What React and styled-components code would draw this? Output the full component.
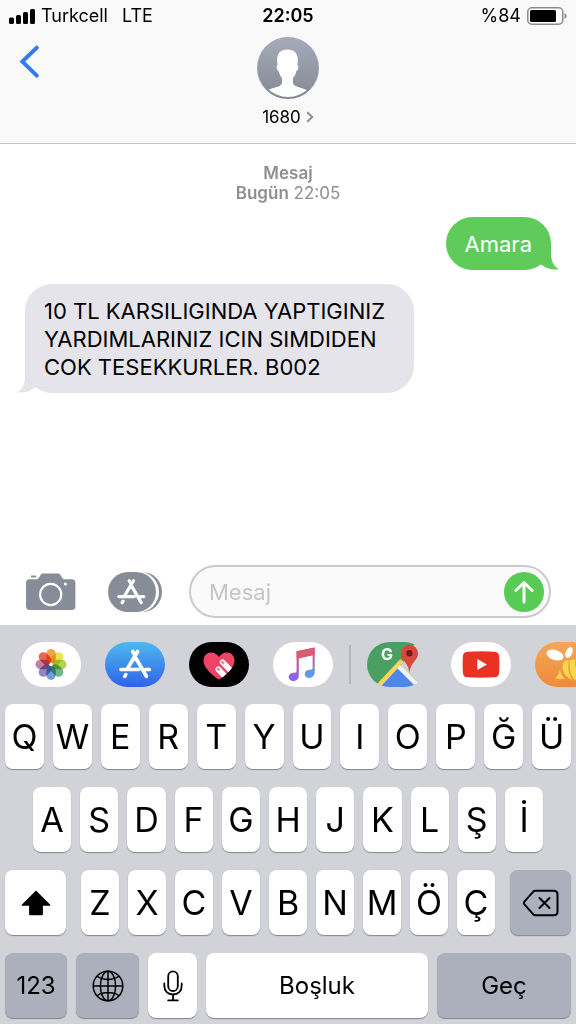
import React from 'react';
import styled, { createGlobalStyle, css } from 'styled-components';

const GlobalStyle = createGlobalStyle`
  * {
    box-sizing: border-box;
  }

  body {
    margin: 0;
    background: #fff;
    color: #000;
    font-family: Inter, 'Liberation Sans', sans-serif;
  }

  button,
  input {
    font: inherit;
    color: inherit;
    border: 0;
    padding: 0;
    background: none;
  }

  svg {
    display: block;
    flex-shrink: 0;
  }
`;

const Page = styled.div`
  display: flex;
  flex-direction: column;
  min-height: 100vh;
`;

const Header = styled.header`
  background: #f9f9f9;
  border-bottom: 1px solid #c4c4c8;
`;

const StatusBar = styled.div`
  display: grid;
  grid-template-columns: 1fr auto 1fr;
  align-items: center;
  height: 32px;
  padding: 0 9px;
  font-size: 18px;
  line-height: 20px;
`;

const StatusGroup = styled.div`
  display: flex;
  align-items: center;
  justify-content: ${props => (props.$end ? 'flex-end' : 'flex-start')};
  gap: 6px;
`;

const Network = styled.span`
  margin-left: 8px;
`;

const Clock = styled.time`
  font-weight: 600;
`;

const NavBar = styled.nav`
  display: grid;
  grid-template-columns: 1fr auto 1fr;
  align-items: start;
  padding: 5px 18px 16px;
`;

const BackButton = styled.button`
  justify-self: start;
  margin-top: 7px;
`;

const Contact = styled.button`
  display: flex;
  flex-direction: column;
  align-items: center;
  gap: 8px;
`;

const ContactName = styled.span`
  display: flex;
  align-items: center;
  gap: 5px;
  font-size: 17px;
  line-height: 20px;
`;

const Thread = styled.main`
  flex: 1;
  display: flex;
  flex-direction: column;
  gap: 14px;
  padding: 19px 25px;
`;

const Stamp = styled.p`
  margin: 0;
  color: #8e8e93;
  font-size: 17px;
  line-height: 20px;
  text-align: center;
`;

const Strong = styled.strong`
  font-weight: 600;
`;

const Bubble = styled.div`
  position: relative;
  max-width: 74%;
  padding: 13px 19px 12px;
  border-radius: 27px;
  font-size: 22px;
  line-height: 28px;
  ${props =>
    props.$sent
      ? css`
          align-self: flex-end;
          background: #5fcb5b;
          color: #fff;
        `
      : css`
          align-self: flex-start;
          background: #e5e4ea;
        `}
`;

const Tail = styled.svg`
  position: absolute;
  bottom: 0;
  ${props =>
    props.$sent
      ? css`
          right: -8px;
          fill: #5fcb5b;
        `
      : css`
          left: -8px;
          fill: #e5e4ea;
          transform: scaleX(-1);
        `}
`;

const Composer = styled.form`
  display: flex;
  align-items: center;
  padding: 0 25px 7px 26px;
`;

const CameraButton = styled.button`
  margin-right: 32px;
`;

const AppsButton = styled.button`
  margin-right: 27px;
`;

const Field = styled.div`
  flex: 1;
  min-width: 0;
  display: flex;
  align-items: center;
  height: 53px;
  padding: 0 5px 0 18px;
  border: 2px solid #cacace;
  border-radius: 27px;
  background: #fafafa;
`;

const MessageInput = styled.input`
  flex: 1;
  min-width: 0;
  font-size: 22px;
  line-height: 28px;
  outline: 0;

  &::placeholder {
    color: #c5c5ca;
    opacity: 1;
  }
`;

const SendButton = styled.button`
  display: flex;
  align-items: center;
  justify-content: center;
  flex-shrink: 0;
  width: 40px;
  height: 40px;
  border-radius: 50%;
  background: #58cb55;
`;

const Dock = styled.section`
  background: #d1d3d9;
`;

const AppStrip = styled.div`
  display: flex;
  align-items: center;
  height: 79px;
  padding-left: 21px;
  overflow: hidden;
`;

const AppGroup = styled.div`
  display: flex;
  gap: 24px;
`;

const Divider = styled.span`
  flex-shrink: 0;
  width: 2px;
  height: 39px;
  margin: 0 16px;
  background: #b4b6bb;
`;

const AppButton = styled.button`
  flex-shrink: 0;
  width: 60px;
  height: 45px;
  border-radius: 23px;
  background: ${props => props.$background};
`;

const Keyboard = styled.div`
  display: flex;
  flex-direction: column;
  gap: 18px;
  padding: 0 5px 6px;
`;

const KeyRow = styled.div`
  display: flex;
  gap: 9px;
  padding: ${props => (props.$inset ? '0 28px' : '0')};
`;

const Letters = styled.div`
  flex: 1;
  display: flex;
  gap: 9px;
  margin: 0 6px;
`;

const Key = styled.button`
  display: flex;
  align-items: center;
  justify-content: center;
  flex: ${props => (props.$width ? `0 0 ${props.$width}px` : '1 1 0')};
  min-width: 0;
  height: 65px;
  border-radius: 8px;
  background: ${props => (props.$dark ? '#abb0bc' : '#fff')};
  box-shadow: 0 1px 1px #85878c;
  font-size: ${props => (props.$word ? '24px' : '34px')};
  line-height: 40px;
`;

function SignalIcon() {
  return (
    <svg width="26" height="15" viewBox="0 0 26 15">
      <rect x="0" y="8.5" width="5" height="6.5" rx="1.5" />
      <rect x="7" y="6" width="5" height="9" rx="1.5" />
      <rect x="14" y="3" width="5" height="12" rx="1.5" />
      <rect x="21" y="0" width="5" height="15" rx="1.5" />
    </svg>
  );
}

function BatteryIcon() {
  return (
    <svg width="40" height="18" viewBox="0 0 40 18">
      <rect x="0.8" y="0.8" width="35" height="16.4" rx="4.2" fill="#fff" stroke="#8b8b8d" strokeWidth="1.5" />
      <rect x="3" y="3" width="26" height="12" rx="1.5" />
      <path d="M37.5 6 Q39.6 7 39.6 9 T37.5 12Z" fill="#8b8b8d" />
    </svg>
  );
}

function BackIcon() {
  return (
    <svg width="24" height="36" viewBox="0 0 24 36" fill="none" stroke="#3478f6" strokeWidth="4">
      <path d="M18.8 3.6 4.4 17.6l14.4 14" strokeLinecap="round" strokeLinejoin="miter" />
    </svg>
  );
}

function AvatarIcon() {
  return (
    <svg width="62" height="62" viewBox="0 0 62 62">
      <defs>
        <linearGradient id="avatar" x1="0" y1="0" x2="0" y2="1">
          <stop offset="0" stopColor="#a5abb9" />
          <stop offset="1" stopColor="#858994" />
        </linearGradient>
        <clipPath id="avatarInner">
          <circle cx="31" cy="31" r="29" />
        </clipPath>
      </defs>
      <circle cx="31" cy="31" r="31" fill="url(#avatar)" />
      <path
        clipPath="url(#avatarInner)"
        fill="#fff"
        d="M30.5 12.5c7.5 0 10.8 4.6 10.3 11.5l-.3 4.2c1.6.3.9 4.8-1.1 5.9-.6 3-1.7 5-3.4 6.8v5.6c2 4 10 4 17 8.300V62H7.500v-7.200c7-4.300 15.500-4.300 17.500-8.300v-5.600c-1.700-1.800-2.800-3.800-3.400-6.800-2-1.100-2.700-5.600-1.100-5.900l-.3-4.200c-.5-6.900 2.800-11.500 10.300-11.500z"
      />
    </svg>
  );
}

function ChevronIcon() {
  return (
    <svg width="8" height="12" viewBox="0 0 8 12" fill="none" stroke="#8e8e93" strokeWidth="2">
      <path d="M1.2 1.2 6.2 6l-5 4.8" />
    </svg>
  );
}

function BubbleTail({ sent }) {
  return (
    <Tail $sent={sent} width="26" height="28" viewBox="0 0 26 28">
      <path d="M18 0v11.500c0 7 2.500 12.500 8 15.800-6.500.9-13-.8-18.500-5L4 0z" />
    </Tail>
  );
}

function CameraIcon() {
  return (
    <svg width="50" height="38" viewBox="0 0 50 38" fill="#868d99">
      <path d="M3.5 6.3H10c1.6 0 2.3-.7 3-1.8l1.4-2.2C15.3 1 16 .6 17.5.6h14c1.5 0 2.2.4 3.1 1.7L36 4.5c.7 1.1 1.4 1.8 3 1.8h6.7c2.5 0 3.7 1.3 3.7 3.7v23.2c0 2.4-1.2 3.7-3.7 3.7H3.7C1.2 36.9 0 35.6 0 33.2V10c0-2.4 1.2-3.7 3.5-3.7z" />
      <rect x="4.8" y="2.4" width="5.6" height="2.2" rx="1" />
      <circle cx="24.7" cy="21.5" r="10.6" fill="none" stroke="#fff" strokeWidth="2.1" />
      <circle cx="39.4" cy="10.9" r="1.5" fill="#fff" />
    </svg>
  );
}

function AppStoreMark() {
  return (
    <g fill="none" stroke="#fff" strokeWidth="3.7" strokeLinecap="round">
      <path d="M32.6 9.5 22.7 26.3M27.8 9.500l2 3.500M31 16.500l10.400 17.800M16 27.500h17.500M40.500 27.500h3.800M20.800 32.600l-1.100 1.800" />
    </g>
  );
}

function AppsIcon() {
  return (
    <svg width="54" height="40" viewBox="0 0 54 40">
      <path d="M20 0h14a20 20 0 0 1 0 40H20z" fill="#868d99" />
      <path d="M20-.5h10.500a20.500 20.500 0 0 1 0 41H20z" fill="#fff" />
      <rect width="48" height="40" rx="20" fill="#868d99" />
      <g transform="translate(-3.2 .4) scale(.88)">
        <AppStoreMark />
      </g>
    </svg>
  );
}

function SendIcon() {
  return (
    <svg width="22" height="24" viewBox="0 0 22 24" fill="none" stroke="#fff" strokeWidth="3" strokeLinecap="round" strokeLinejoin="round">
      <path d="M11 22V2.500M2.800 10.500 11 2.500l8.200 8" />
    </svg>
  );
}

const PETALS = ['#f2993a', '#ecdf3a', '#aacb3f', '#62ae80', '#5f97cc', '#857cba', '#ba739e', '#e85443'];

function PhotosIcon() {
  return (
    <svg width="60" height="45" viewBox="0 0 60 45">
      {PETALS.map((color, i) => (
        <rect
          key={color}
          x="25.300"
          y="7"
          width="9.400"
          height="14"
          rx="4.700"
          fill={color}
          opacity="0.9"
          transform={`rotate(${i * 45} 30 22.500)`}
          style={{ mixBlendMode: 'multiply' }}
        />
      ))}
    </svg>
  );
}

function AppStoreIcon() {
  return (
    <svg width="60" height="45" viewBox="0 0 60 45">
      <AppStoreMark />
    </svg>
  );
}

function DigitalTouchIcon() {
  return (
    <svg width="60" height="45" viewBox="0 0 60 45">
      <defs>
        <clipPath id="heart">
          <path d="M30 37.500C25 34.500 14.500 26.500 14.500 18.500c0-4.600 3.400-8 7.700-8 3.200 0 6.200 1.700 7.800 4.600 1.600-2.900 4.600-4.600 7.800-4.600 4.300 0 7.700 3.400 7.700 8 0 8-10.500 16-15.500 19z" />
        </clipPath>
      </defs>
      <g clipPath="url(#heart)">
        <rect width="60" height="45" fill="#ef4368" />
        <g stroke="#fff" strokeLinecap="round" strokeWidth="5.600">
          <path d="M29.200 27.200 39 37.500M33.600 20.200 45 32" />
        </g>
        <g stroke="#f2849b" strokeLinecap="round" strokeWidth="2.400">
          <path d="M28.800 26.800l1 1M33.200 19.800l1 1" />
        </g>
      </g>
    </svg>
  );
}

function MusicIcon() {
  return (
    <svg width="60" height="45" viewBox="0 0 60 45">
      <defs>
        <linearGradient id="musicLeft" x1="0" y1="0" x2="0" y2="1">
          <stop offset="0.200" stopColor="#dc5872" />
          <stop offset="0.900" stopColor="#8a62f2" />
        </linearGradient>
        <linearGradient id="musicRight" x1="0" y1="0" x2="0" y2="1">
          <stop offset="0.200" stopColor="#cf5a86" />
          <stop offset="0.900" stopColor="#5a9dee" />
        </linearGradient>
      </defs>
      <path
        fill="url(#musicLeft)"
        d="M23.600 9.300 30 8v7.300l-4.200.9v17.300c0 3.200-2.300 5.500-5.600 5.500-2.600 0-4.500-1.500-4.500-3.900 0-2.500 1.900-4.200 4.800-4.400 1.500-.1 3.100-.2 3.100-1.800z"
      />
      <path
        fill="url(#musicRight)"
        d="M30 8l11.700-2.600v24.700c0 3.500-2.300 5.900-5.500 5.900-2.600 0-4.500-1.500-4.500-3.900 0-2.500 1.900-4.200 4.800-4.400 1.500-.1 3.100-.2 3.100-1.800V13.200L30 15.300z"
      />
      <path fill="#da5a72" d="M23.600 9.300 41.700 5.400v7.400l-18.100 4z" />
    </svg>
  );
}

function MapsIcon() {
  return (
    <svg width="60" height="45" viewBox="0 0 60 45">
      <defs>
        <clipPath id="mapsShape">
          <rect width="60" height="45" rx="22.500" />
        </clipPath>
      </defs>
      <g clipPath="url(#mapsShape)">
        <rect width="60" height="45" fill="#d1d3d7" />
        <path d="M0 0h49L35 22 12 45H0z" fill="#4a9f62" />
        <path d="M13 45 31 26l19 19z" fill="#4f86ec" />
        <path d="M11.500 43.500 35 18.500" stroke="#fbd45a" strokeWidth="4.200" />
        <path d="M31.500 24.500 50 43" stroke="#f4f4f6" strokeWidth="4" />
      </g>
      <text x="14" y="18" fill="#fff" fontFamily="Inter, sans-serif" fontSize="16" fontWeight="700">
        G
      </text>
      <path d="M42.400 31c-.8-5.500-2.300-8.300-4.700-11.200-2.500-2.800-3.900-4.800-3.900-8.500a8.600 8.600 0 0 1 17.200 0c0 3.700-1.400 5.700-3.900 8.500-2.400 2.900-3.900 5.700-4.700 11.200z" fill="#d8483b" />
      <circle cx="42.400" cy="11.200" r="3.200" fill="#6f1d1a" />
    </svg>
  );
}

function YoutubeIcon() {
  return (
    <svg width="60" height="45" viewBox="0 0 60 45">
      <path d="M16.500 9.700q13.500-.8 27 0c3 .2 4.400 1.700 4.600 4.600q.6 8.200 0 16.400c-.2 2.900-1.600 4.400-4.600 4.600q-13.500.8-27 0c-3-.2-4.400-1.700-4.600-4.600q-.6-8.200 0-16.400c.2-2.900 1.600-4.400 4.600-4.600z" fill="#e83223" />
      <path d="M26.300 17v11l9.600-5.500z" fill="#fff" />
    </svg>
  );
}

function BeeIcon() {
  return (
    <svg width="60" height="45" viewBox="0 0 60 45">
      <ellipse cx="20" cy="13" rx="8.800" ry="5" fill="#fff" transform="rotate(18 20 13)" />
      <ellipse cx="34" cy="10.500" rx="3.300" ry="5.800" fill="#fff" transform="rotate(25 34 10.500)" />
      <g fill="#fad749">
        <path d="M25 27.500c.5 3.800 2 6.800 4.800 9.300-3 .5-6.300.3-9.300-.9 2.300-2.200 3.600-5 4.500-8.400z" />
        <path d="M29 19.500c-3.600 6-.4 15.500 8.300 18.200-3.500-5.600-4.800-12-3.600-19.200-1.800-.5-3.400-.2-4.700 1z" />
        <path d="M35 18c-1.500 7.500.2 14.500 4.200 19.800 2.400 0 4.500-.6 6.300-1.900-4.200-5-5.800-11-5.300-18.400z" />
        <path d="M41.500 17c-.2 6.800 1.300 12.700 5.100 17.700C51 30 50 20 41.500 17z" />
      </g>
    </svg>
  );
}

function ShiftIcon() {
  return (
    <svg width="30" height="26" viewBox="0 0 30 26">
      <path d="M15 .6 29 14.400c.6.7.3 1.300-.5 1.300h-6.600v8c0 1-.6 1.600-1.600 1.600H9.700c-1 0-1.600-.6-1.600-1.600v-8H1.500c-.8 0-1.100-.6-.5-1.300z" />
    </svg>
  );
}

function DeleteIcon() {
  return (
    <svg width="36" height="28" viewBox="0 0 36 28" fill="none" stroke="#000" strokeWidth="2" strokeLinejoin="round" strokeLinecap="round">
      <path d="M12.500 1.800h18.200c2.400 0 3.800 1.400 3.800 3.800v16.800c0 2.400-1.400 3.800-3.800 3.800H12.500c-1 0-1.700-.3-2.400-1L1.400 15.400c-.8-.9-.8-1.900 0-2.800l8.700-9.800c.7-.7 1.400-1 2.400-1z" />
      <path d="M16.500 9l10 10M26.500 9l-10 10" />
    </svg>
  );
}

function GlobeIcon() {
  return (
    <svg width="32" height="32" viewBox="0 0 32 32" fill="none" stroke="#000" strokeWidth="1.500">
      <circle cx="16" cy="16" r="14.800" />
      <ellipse cx="16" cy="16" rx="7.600" ry="14.800" />
      <path d="M16 1.200v29.600M1.200 16h29.600M5.200 6.400c6 4 15.600 4 21.600 0M5.200 25.600c6-4 15.600-4 21.600 0" />
    </svg>
  );
}

function MicIcon() {
  return (
    <svg width="20" height="32" viewBox="0 0 20 32" fill="none" stroke="#000" strokeWidth="1.800" strokeLinecap="round">
      <rect x="5.200" y="1.400" width="9.600" height="19.600" rx="4.800" />
      <path d="M1.300 13.500v2.300c0 5.200 3.500 8.700 8.700 8.700s8.700-3.500 8.700-8.700v-2.300M10 24.500v5.700M5.200 30.400h9.600" />
    </svg>
  );
}

const TOP_ROW = ['Q', 'W', 'E', 'R', 'T', 'Y', 'U', 'I', 'O', 'P', 'Ğ', 'Ü'];
const HOME_ROW = ['A', 'S', 'D', 'F', 'G', 'H', 'J', 'K', 'L', 'Ş', 'İ'];
const BOTTOM_ROW = ['Z', 'X', 'C', 'V', 'B', 'N', 'M', 'Ö', 'Ç'];

const SYSTEM_APPS = [
  { name: 'Fotoğraflar', background: '#fff', Icon: PhotosIcon },
  { name: 'App Store', background: 'linear-gradient(#4fb9ee, #2f63ea)', Icon: AppStoreIcon },
  { name: 'Digital Touch', background: '#000', Icon: DigitalTouchIcon },
  { name: 'Müzik', background: '#fff', Icon: MusicIcon },
];

const OTHER_APPS = [
  { name: 'Google Maps', background: 'none', Icon: MapsIcon },
  { name: 'YouTube', background: '#fff', Icon: YoutubeIcon },
  { name: 'Swarm', background: 'linear-gradient(#f3a759, #ef8b3b)', Icon: BeeIcon },
];

function Apps({ items }) {
  return (
    <AppGroup>
      {items.map(({ name, background, Icon }) => (
        <AppButton key={name} type="button" aria-label={name} $background={background}>
          <Icon />
        </AppButton>
      ))}
    </AppGroup>
  );
}

function App() {
  return (
    <Page>
      <GlobalStyle />
      <Header>
        <StatusBar>
          <StatusGroup>
            <SignalIcon />
            <span>Turkcell</span>
            <Network>LTE</Network>
          </StatusGroup>
          <Clock>22:05</Clock>
          <StatusGroup $end>
            <span>%84</span>
            <BatteryIcon />
          </StatusGroup>
        </StatusBar>
        <NavBar>
          <BackButton type="button" aria-label="Geri">
            <BackIcon />
          </BackButton>
          <Contact type="button">
            <AvatarIcon />
            <ContactName>
              1680
              <ChevronIcon />
            </ContactName>
          </Contact>
        </NavBar>
      </Header>

      <Thread>
        <Stamp>
          <Strong>Mesaj</Strong>
          <br />
          <Strong>Bugün</Strong> 22:05
        </Stamp>
        <Bubble $sent>
          Amara
          <BubbleTail sent />
        </Bubble>
        <Bubble>
          10 TL KARSILIGINDA YAPTIGINIZ YARDIMLARINIZ ICIN SIMDIDEN COK TESEKKURLER. B002
          <BubbleTail />
        </Bubble>
      </Thread>

      <Composer onSubmit={e => e.preventDefault()}>
        <CameraButton type="button" aria-label="Kamera">
          <CameraIcon />
        </CameraButton>
        <AppsButton type="button" aria-label="Uygulamalar">
          <AppsIcon />
        </AppsButton>
        <Field>
          <MessageInput type="text" placeholder="Mesaj" aria-label="Mesaj" />
          <SendButton type="submit" aria-label="Gönder">
            <SendIcon />
          </SendButton>
        </Field>
      </Composer>

      <Dock>
        <AppStrip>
          <Apps items={SYSTEM_APPS} />
          <Divider />
          <Apps items={OTHER_APPS} />
        </AppStrip>
        <Keyboard>
          <KeyRow>
            {TOP_ROW.map(letter => (
              <Key key={letter} type="button">
                {letter}
              </Key>
            ))}
          </KeyRow>
          <KeyRow $inset>
            {HOME_ROW.map(letter => (
              <Key key={letter} type="button">
                {letter}
              </Key>
            ))}
          </KeyRow>
          <KeyRow>
            <Key type="button" aria-label="Shift" $width={61}>
              <ShiftIcon />
            </Key>
            <Letters>
              {BOTTOM_ROW.map(letter => (
                <Key key={letter} type="button">
                  {letter}
                </Key>
              ))}
            </Letters>
            <Key type="button" aria-label="Sil" $width={61} $dark>
              <DeleteIcon />
            </Key>
          </KeyRow>
          <KeyRow>
            <Key type="button" $width={62} $dark $word>
              123
            </Key>
            <Key type="button" aria-label="Klavye dili" $width={63} $dark>
              <GlobeIcon />
            </Key>
            <Key type="button" aria-label="Dikte" $width={49}>
              <MicIcon />
            </Key>
            <Key type="button" $word>
              Boşluk
            </Key>
            <Key type="button" $width={134} $dark $word>
              Geç
            </Key>
          </KeyRow>
        </Keyboard>
      </Dock>
    </Page>
  );
}

export default App;
